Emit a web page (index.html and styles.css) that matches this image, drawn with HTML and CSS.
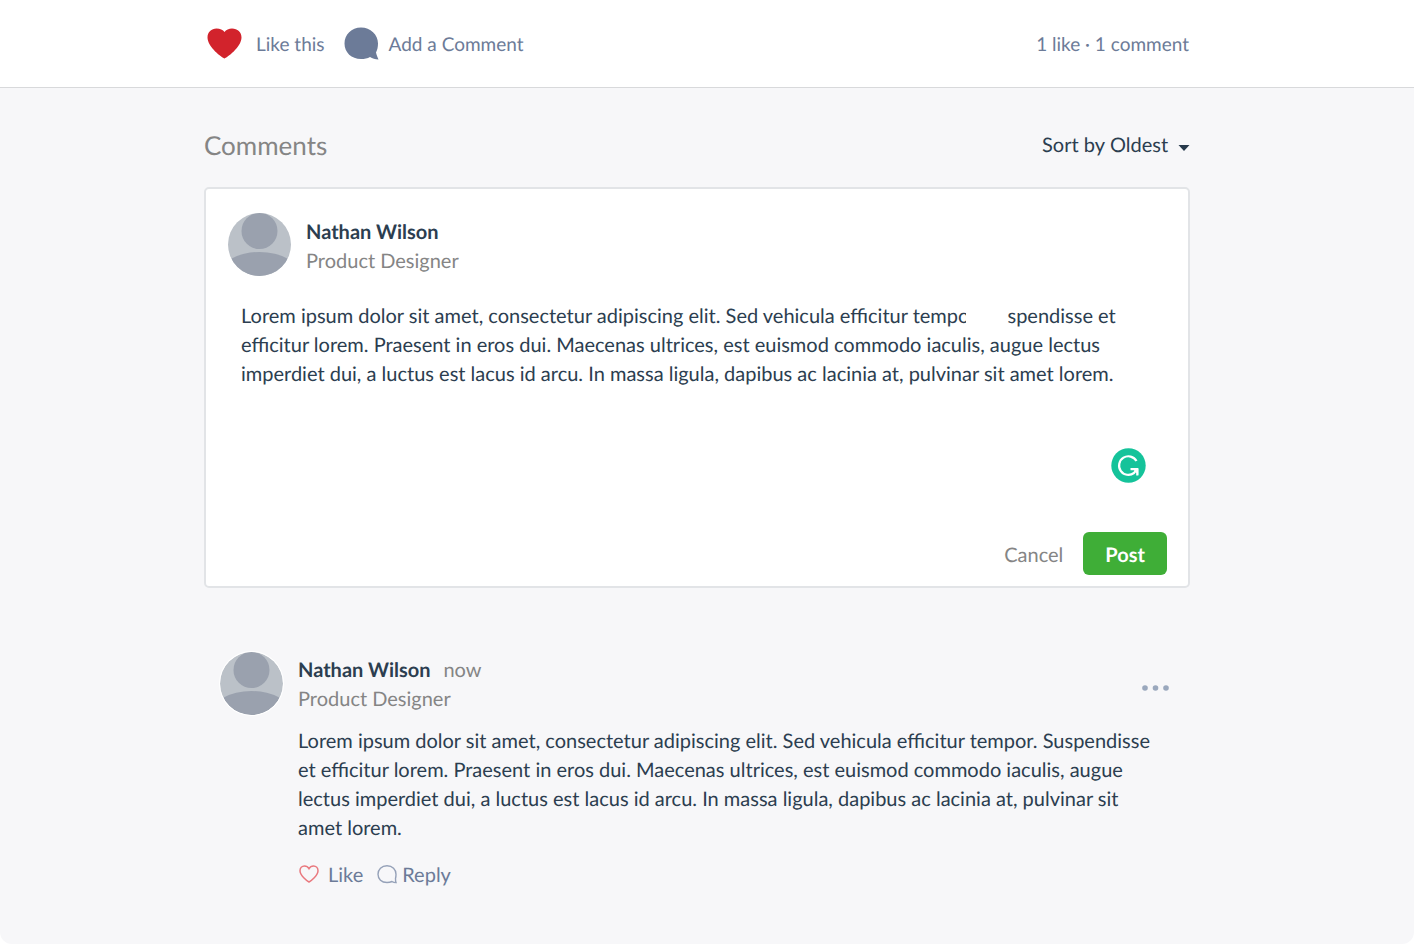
FILE: index.html
```
<!DOCTYPE html>
<html lang="en">
<head>
<meta charset="utf-8">
<meta name="viewport" content="width=device-width, initial-scale=1">
<title>Comments</title>
<link rel="stylesheet" href="styles.css">
</head>
<body>
<svg class="defs" aria-hidden="true">
  <symbol id="avatar" viewBox="0 0 63 63">
    <clipPath id="round"><circle cx="31.500" cy="31.500" r="31.500"/></clipPath>
    <g clip-path="url(#round)">
      <rect width="63" height="63" fill="#bbc1c8"/>
      <circle cx="31.500" cy="18" r="18" fill="#9aa1ae"/>
      <ellipse cx="31.500" cy="62" rx="40" ry="23" fill="#9aa1ae"/>
    </g>
  </symbol>
</svg>
<header class="topbar">
  <div class="topbar-actions">
    <button class="action" type="button">
      <svg class="heart" viewBox="0 0 36 32" aria-hidden="true"><path d="M18.500 30.500C16.500 30 1.500 19 1.500 9.500C1.500 4 5.500 0.500 10.500 0.500C14 0.500 17 2 18.500 4C20 2 23 0.500 26 0.500C31.500 0.500 35.500 4 35.500 9.500C35.500 19 20.500 30 18.500 30.500Z" fill="#d2232c"/></svg>
      <span>Like this</span>
    </button>
    <button class="action" type="button">
      <svg class="bubble" viewBox="0 0 35 33" aria-hidden="true"><path d="M17 0.500C7.500 0.500 0.500 7.500 0.500 16.500C0.500 25.500 7.500 32 17 32C20.500 32 23.500 31.500 26 30C28.500 31.500 31 32.500 34.500 32.500C33.500 30 32.500 28 32 25.500C33.300 23 34 20 34 16.500C34 7.500 26.500 0.500 17 0.500Z" fill="#6c7b98"/></svg>
      <span>Add a Comment</span>
    </button>
  </div>
  <p class="counts">1 like · 1 comment</p>
</header>
<main class="comments">
  <div class="comments-head">
    <h1 class="title">Comments</h1>
    <div class="sort">
      <label for="sort">Sort by</label>
      <select id="sort" class="sort-select"><option>Oldest</option></select>
      <svg class="caret" viewBox="0 0 12 6" aria-hidden="true"><path d="M0.500 0H11.500L6 6Z" fill="#26394b"/></svg>
    </div>
  </div>
  <form class="composer">
    <div class="author">
      <svg class="avatar" aria-hidden="true"><use href="#avatar"/></svg>
      <div>
        <p class="name">Nathan Wilson</p>
        <p class="role">Product Designer</p>
      </div>
    </div>
    <div class="field">
      <textarea class="text" aria-label="Comment" spellcheck="false">Lorem ipsum dolor sit amet, consectetur adipiscing elit. Sed vehicula efficitur tempor. Suspendisse et efficitur lorem. Praesent in eros dui. Maecenas ultrices, est euismod commodo iaculis, augue lectus imperdiet dui, a luctus est lacus id arcu. In massa ligula, dapibus ac lacinia at, pulvinar sit amet lorem.</textarea>
      <span class="patch"></span>
      <svg class="checker" viewBox="0 0 35 35" role="img" aria-label="Writing assistant"><circle cx="17.500" cy="17.500" r="17.200" fill="#15c39a"/><g fill="none" stroke="#fff" stroke-width="2.200"><path d="M25.500 13A9.300 9.300 0 1 0 23 25L25 22.500"/><path d="M19.500 21.200H26.300V27.500"/></g><path d="M22 21H27.300V27Z" fill="#fff"/></svg>
    </div>
    <div class="buttons">
      <button class="cancel" type="button">Cancel</button>
      <button class="post" type="button">Post</button>
    </div>
  </form>
  <article class="comment">
    <svg class="avatar ringed" aria-hidden="true"><use href="#avatar"/></svg>
    <div class="comment-main">
      <div class="comment-head">
        <div>
          <p class="name">Nathan Wilson <span class="time">now</span></p>
          <p class="role">Product Designer</p>
        </div>
        <button class="more" type="button" aria-label="More options">
          <svg class="dots" viewBox="0 0 27 6" aria-hidden="true"><g fill="#9aa8bd"><circle cx="3" cy="3" r="2.800"/><circle cx="13.500" cy="3" r="2.800"/><circle cx="24" cy="3" r="2.800"/></g></svg>
        </button>
      </div>
      <p class="body">Lorem ipsum dolor sit amet, consectetur adipiscing elit. Sed vehicula efficitur tempor. Suspendisse et efficitur lorem. Praesent in eros dui. Maecenas ultrices, est euismod commodo iaculis, augue lectus imperdiet dui, a luctus est lacus id arcu. In massa ligula, dapibus ac lacinia at, pulvinar sit amet lorem.</p>
      <div class="comment-actions">
        <button class="action like" type="button">
          <svg class="mini" viewBox="0 0 20 19" aria-hidden="true"><path d="M10 17C8 16 1 10.500 1 5.700C1 3 3 1 5.500 1C7.500 1 9 2 10 3.700C11 2 12.500 1 14.500 1C17 1 19 3 19 5.700C19 10.500 12 16 10 17Z" fill="none" stroke="#e9787e" stroke-width="1.500"/></svg>
          <span>Like</span>
        </button>
        <button class="action reply" type="button">
          <svg class="mini" viewBox="0 0 20 19" aria-hidden="true"><path d="M10 0.800C4.500 0.800 1 4.600 1 9.300C1 14 4.500 17.500 10 17.500C12 17.500 13.500 17.200 15 16.500C16.300 17.300 17.500 17.600 19 17.600C18.500 16.500 18.500 15.500 18.500 13.500C18.800 12.500 19 11 19 9.300C19 4.600 15.500 0.800 10 0.800Z" fill="none" stroke="#95a1b8" stroke-width="1.400"/></svg>
          <span>Reply</span>
        </button>
      </div>
    </div>
  </article>
</main>
</body>
</html>
```

FILE: styles.css
```
* { box-sizing: border-box; }
body {
  margin: 0;
  min-height: 100vh;
  display: flex;
  flex-direction: column;
  background: #fff;
  color: #2c3e50;
  font: 20px/29px Lato, sans-serif;
  text-rendering: geometricPrecision;
}
h1, p { margin: 0; font-weight: 400; }
button, select, textarea {
  margin: 0;
  padding: 0;
  border: 0;
  background: none;
  color: inherit;
  font: inherit;
  text-rendering: inherit;
  appearance: none;
}
button { cursor: pointer; }
svg { display: block; flex: none; }
.defs { position: absolute; width: 0; height: 0; }

.topbar {
  display: flex;
  align-items: center;
  justify-content: space-between;
  height: 88px;
  padding: 0 225px 0 206px;
  border-bottom: 1px solid #d8d9db;
  color: #6c7b98;
  font-size: 19px;
}
.topbar-actions { display: flex; gap: 19px; }
.action { display: flex; align-items: center; color: #6c7b98; }
.topbar .action { gap: 10px; }
.topbar span, .counts { padding-top: 2px; }
.heart { width: 36px; height: 32px; margin-right: 4px; }
.bubble { width: 35px; height: 33px; }

.comments {
  flex: 1;
  margin-bottom: 1px;
  padding: 40px 224px 48px 204px;
  background: #f7f7f9;
  border-radius: 0 0 12px 12px;
}
.comments-head {
  display: flex;
  align-items: center;
  justify-content: space-between;
  margin-bottom: 25px;
}
.title { color: #858585; font-size: 26px; line-height: 34px; }
.sort { display: flex; align-items: center; gap: 5px; }
.caret { width: 12px; height: 6px; margin: 5px 0 0 4px; }

.composer {
  padding: 24px 21px 11px 22px;
  background: #fff;
  border: 2px solid #e2e4e7;
  border-radius: 5px;
}
.author { display: flex; align-items: center; gap: 15px; }
.author > div { padding-top: 5px; }
.avatar { width: 63px; height: 63px; }
.ringed { border-radius: 50%; box-shadow: 0 0 0 1px #fff; }
.name { font-weight: 700; }
.role, .time { color: #858585; font-weight: 400; }
.time { margin-left: 8px; }
.field { position: relative; margin-top: 14px; }
.text {
  display: block;
  width: 100%;
  height: 230px;
  padding: 12px 13px;
  outline: 0;
  resize: none;
  overflow: hidden;
}
.patch {
  position: absolute;
  left: 738px;
  top: 12px;
  width: 41px;
  height: 29px;
  background: #fff;
}
.checker {
  position: absolute;
  right: 21px;
  bottom: 37px;
  width: 35px;
  height: 35px;
}
.buttons { display: flex; justify-content: flex-end; gap: 20px; margin-top: 12px; }
.cancel { padding-top: 4px; color: #858585; }
.post {
  padding: 9px 22px 5px;
  background: #3fae37;
  border-radius: 6px;
  color: #fff;
  font-weight: 700;
}

.comment { display: flex; gap: 15px; padding: 64px 21px 0 16px; }
.comment-main { flex: 1; padding-top: 4px; }
.comment-head {
  display: flex;
  align-items: center;
  justify-content: space-between;
}
.more { padding: 14px 0 8px; }
.dots { width: 27px; height: 6px; }
.body { margin-top: 13px; padding-right: 4px; }
.comment-actions { display: flex; gap: 14px; margin-top: 16px; }
.comment-actions span { padding-top: 2px; }
.mini { width: 20px; height: 19px; }
.like { gap: 9px; padding-left: 1px; }
.reply { gap: 5px; }
```
